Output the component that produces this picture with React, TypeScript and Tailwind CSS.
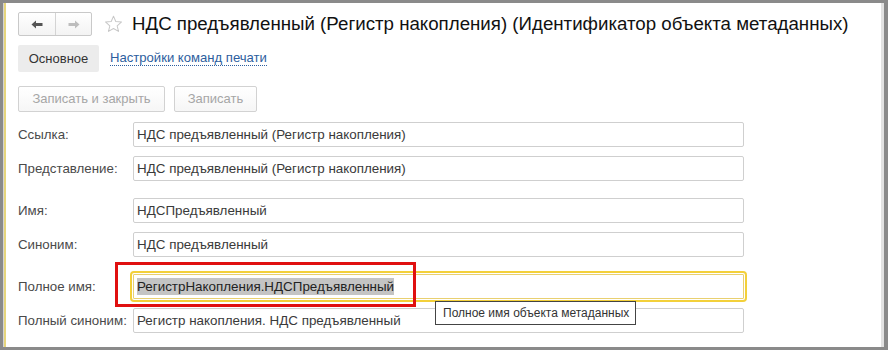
import React from "react";

const font = { fontFamily: '"Liberation Sans", Arial, sans-serif' };

function Field({ label, value, className = "" }: { label: string; value: string; className?: string }) {
  return (
    <div className={`flex items-center h-[25px] ${className}`}>
      <div className="w-[115px] shrink-0 text-[13.3px] text-[#4a4a4a] leading-none">{label}</div>
      <div className="w-[611px] h-[25px] border border-[#cfcfcf] rounded-[2px] flex items-center pl-[3px] text-[13.4px] text-[#3a3a3a] leading-none bg-white">
        {value}
      </div>
    </div>
  );
}

export default function App() {
  return (
    <div
      className="w-[888px] h-[350px] bg-white border-t-[3px] border-b-[3px] border-l-[3px] border-r-[4px] border-[#8a8a8a] flex overflow-hidden"
      style={font}
    >
      <div className="w-[1px] bg-[#d4d4d4] shrink-0" />
      <div className="w-[2px] bg-[#e6d57c] shrink-0" />
      <div className="relative flex-1 pt-[9px] pl-[12px] flex flex-col">
        {/* Title row */}
        <div className="flex items-center h-[24px]">
          <div className="flex w-[74px] h-[24px] border border-[#c9c9c9] rounded-[2px] bg-gradient-to-b from-white to-[#f3f3f3]">
            <div className="w-[37px] h-full flex items-center justify-center border-r border-[#d4d4d4]">
              <svg width="12" height="9" viewBox="0 0 12 9">
                <path d="M0.5 4.5 L5 0.5 L5 3 L11.5 3 L11.5 6 L5 6 L5 8.5 Z" fill="#555" />
              </svg>
            </div>
            <div className="flex-1 h-full flex items-center justify-center">
              <svg width="12" height="9" viewBox="0 0 12 9">
                <path d="M11.5 4.5 L7 0.5 L7 3 L0.5 3 L0.5 6 L7 6 L7 8.5 Z" fill="#bdbdbd" />
              </svg>
            </div>
          </div>
          <svg className="ml-[12px]" width="19" height="18" viewBox="0 0 24 23">
            <path
              d="M12 1.5 L14.9 8.3 L22.3 8.9 L16.7 13.8 L18.4 21 L12 17.2 L5.6 21 L7.3 13.8 L1.7 8.9 L9.1 8.3 Z"
              fill="none"
              stroke="#c8c8c8"
              strokeWidth="1.3"
              strokeLinejoin="round"
            />
          </svg>
          <div className="ml-[9px] text-[18.7px] text-[#111] leading-none whitespace-nowrap">
            НДС предъявленный (Регистр накопления) (Идентификатор объекта метаданных)
          </div>
        </div>

        {/* Tabs row */}
        <div className="flex items-center mt-[9px] h-[27px]">
          <div className="w-[81px] h-[27px] bg-[#ececec] rounded-[2px] flex items-center justify-center text-[13px] text-[#333]">
            Основное
          </div>
          <div className="ml-[11px] text-[13.1px] text-[#2d5e9e] leading-none border-b border-dotted border-[#2d5e9e] pb-[1px]">
            Настройки команд печати
          </div>
        </div>

        {/* Buttons row */}
        <div className="flex items-center mt-[14px] h-[26px] gap-[9px]">
          <div className="w-[147px] h-[26px] border border-[#d2d2d2] rounded-[2px] bg-gradient-to-b from-white to-[#f6f6f6] flex items-center justify-center text-[13px] text-[#a6a6a6]">
            Записать и закрыть
          </div>
          <div className="w-[83px] h-[26px] border border-[#d2d2d2] rounded-[2px] bg-gradient-to-b from-white to-[#f6f6f6] flex items-center justify-center text-[13px] text-[#a6a6a6]">
            Записать
          </div>
        </div>

        <Field className="mt-[10px]" label="Ссылка:" value="НДС предъявленный (Регистр накопления)" />
        <Field className="mt-[9px]" label="Представление:" value="НДС предъявленный (Регистр накопления)" />
        <Field className="mt-[17px]" label="Имя:" value="НДСПредъявленный" />
        <Field className="mt-[9px]" label="Синоним:" value="НДС предъявленный" />

        <div className="flex items-center h-[25px] mt-[17px]">
          <div className="w-[115px] shrink-0 text-[13.3px] text-[#4a4a4a] leading-none">Полное имя:</div>
          <div className="w-[611px] h-[25px] border border-[#e9d070] rounded-[1px] outline-2 outline-[#f3d03a] outline-offset-[1px] flex items-center pl-[3px] text-[13.4px] text-[#222] leading-none bg-white">
            <span className="bg-[#c4c4c4] py-[2px]">РегистрНакопления.НДСПредъявленный</span>
          </div>
        </div>

        <Field className="mt-[9px]" label="Полный синоним:" value="Регистр накопления. НДС предъявленный" />

        {/* Red highlight box */}
        <div className="absolute left-[109px] top-[259px] w-[301px] h-[45px] border-[3px] border-[#e01010]" />

        {/* Tooltip */}
        <div className="absolute left-[429px] top-[298px] w-[201px] h-[24px] border border-[#444] bg-white flex items-center pl-[7px] text-[12px] text-[#333] whitespace-nowrap">
          Полное имя объекта метаданных
        </div>
      </div>
      <div className="w-[3px] bg-[#e2e2e2] shrink-0" />
    </div>
  );
}
